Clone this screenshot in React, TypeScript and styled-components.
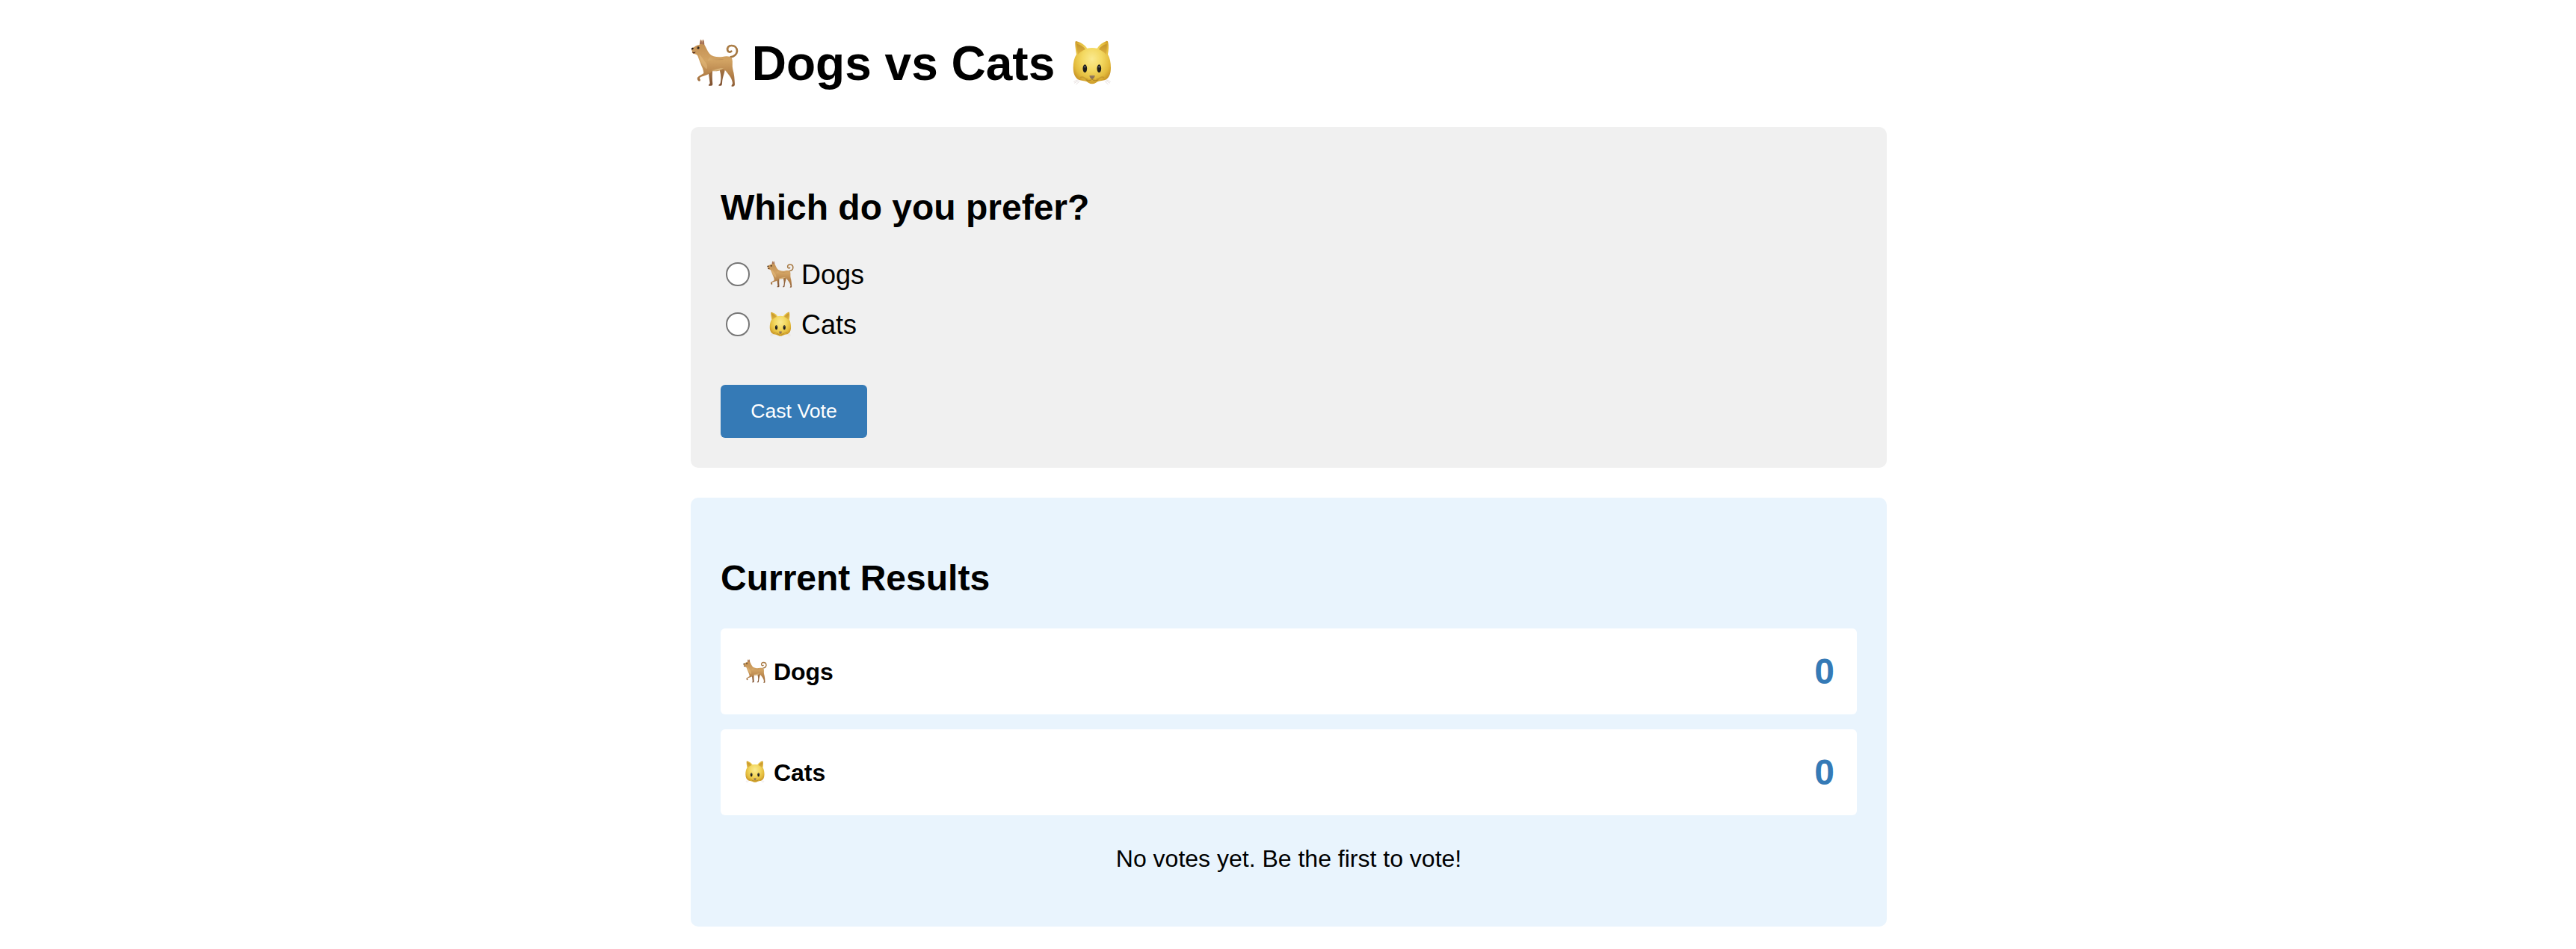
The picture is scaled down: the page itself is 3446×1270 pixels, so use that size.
import React, { useId, useState } from "react";
import styled, { createGlobalStyle } from "styled-components";

const GlobalStyle = createGlobalStyle`
  body {
    margin: 0;
    background: #ffffff;
    color: #000000;
    font-family: "Liberation Sans", Arial, sans-serif;
    font-size: 32px;
  }
`;

const Page = styled.main`
  width: 1600px;
  margin: 0 auto;
  padding: 49px 0 30px 2px;
`;

const Title = styled.h1`
  margin: 0 0 49px;
  font-size: 64px;
  line-height: 72px;
  height: 72px;
  white-space: pre;
`;

const Panel = styled.section<{ $tone: string }>`
  padding: 40px;
  border-radius: 10px;
  background: ${(p) => p.$tone};

  & + & {
    margin-top: 40px;
  }
`;

const Heading = styled.h2<{ $gap: number }>`
  margin: 41px 0 ${(p) => p.$gap}px;
  font-size: 48px;
  line-height: 54px;
`;

const Options = styled.div`
  display: flex;
  flex-direction: column;
  align-items: flex-start;
  gap: 27px;
`;

const Option = styled.label`
  display: flex;
  align-items: center;
  height: 40px;
  font-size: 36px;
  line-height: 40px;
  white-space: pre;
`;

const Radio = styled.input`
  appearance: none;
  box-sizing: border-box;
  width: 31.4px;
  height: 31.4px;
  margin: 0 23.3px 2px 7.3px;
  border: 2.4px solid #767676;
  border-radius: 50%;
  background: #ffffff;

  &:checked {
    border: 9px solid #0075ff;
  }
`;

const VoteButton = styled.button`
  display: block;
  width: 196px;
  height: 71px;
  margin: 60px 0 0;
  padding: 0 0 1px;
  border: 0;
  border-radius: 6px;
  background: #357ab6;
  color: #ffffff;
  font-family: inherit;
  font-size: 26.667px;
  line-height: 30px;
`;

const Results = styled.div`
  display: flex;
  flex-direction: column;
  gap: 20px;
`;

const ResultRow = styled.div`
  display: flex;
  justify-content: space-between;
  align-items: center;
  box-sizing: border-box;
  height: 115px;
  padding: 0 30px;
  border-radius: 6px;
  background: #ffffff;
`;

const ResultName = styled.span`
  font-weight: bold;
  line-height: 36px;
  height: 36px;
  white-space: pre;
`;

const ResultCount = styled.span`
  color: #357ab6;
  font-size: 48px;
  font-weight: bold;
  line-height: 54px;
`;

const Message = styled.p`
  margin: 40px 0 33px;
  line-height: 36px;
  text-align: center;
`;

const Emoji = styled.svg`
  display: inline-block;
  width: 1em;
  height: 1em;
  vertical-align: -0.133em;
  overflow: visible;
`;

function Dog() {
  const id = useId();
  const coat = `${id}coat`;
  const leg = `${id}leg`;
  const back = `${id}back`;
  return (
    <Emoji viewBox="42 34 192 192" role="img" aria-label="Dog">
      <defs>
        <linearGradient id={coat} x1="0" y1="0" x2="0" y2="1">
          <stop offset="0" stopColor="#c08c50" />
          <stop offset="0.45" stopColor="#d2a363" />
          <stop offset="0.75" stopColor="#b5824a" />
          <stop offset="1" stopColor="#8c5c36" />
        </linearGradient>
        <linearGradient id={leg} x1="0" y1="0" x2="0" y2="1">
          <stop offset="0" stopColor="#a87845" />
          <stop offset="1" stopColor="#7d4f30" />
        </linearGradient>
        <linearGradient id={back} x1="0" y1="0" x2="1" y2="0">
          <stop offset="0" stopColor="#e0b777" />
          <stop offset="1" stopColor="#ad7b46" />
        </linearGradient>
      </defs>
      <path d="M202 107C216 105 227 96 228 83C228 69 218 61 206 61C194 61 187 69 190 80C192 87 200 89 205 84" fill="none" stroke="#a3753f" strokeWidth="8" strokeLinecap="round" />
      <path d="M191 75C193 64 207 59 218 66" fill="none" stroke="#c99a60" strokeWidth="2.5" />
      <path d="M112 160L130 158C128 176 128 195 130 216Q130 222 124 222H114C113 217 119 216 119 212Z" fill={`url(#${leg})`} />
      <path d="M156 152L180 154C178 172 169 188 168 212Q168 221 163 222H154C154 217 160 215 161 211C166 190 162 172 156 152Z" fill={`url(#${leg})`} />
      <path d="M77 58C78 50 79 42 82 37Q86 36 87 48Q88 40 91 36Q96 39 97 57C103 66 108 82 118 94C128 105 148 109 170 106C186 102 202 103 208 114C212 126 207 140 211 156C217 176 218 196 219 218Q218 225 212 225H206C204 220 210 218 210 212C208 194 198 182 187 168C180 160 177 156 170 157C155 164 140 165 128 163C118 176 104 180 84 186C77 189 76 192 81 198Q82 204 75 204C69 200 67 194 69 189C75 181 88 177 94 172C93 154 85 144 80 129C74 116 73 108 69 101C64 95 57 96 50 92Q46 90 48 84L45 78Q44 70 49 69C59 68 62 59 77 58Z" fill={`url(#${coat})`} />
      <path d="M76 96C78 115 84 134 98 149C109 163 113 146 103 130C91 117 88 105 76 96Z" fill="#e9c283" opacity="0.45" />
      <path d="M110 122C130 116 149 124 176 116C155 112 136 119 120 106Z" fill={`url(#${back})`} opacity="0.5" />
      <path d="M126 160C142 159 153 150 174 152C158 162 140 166 126 160Z" fill="#f1dba6" opacity="0.5" />
      <path d="M80 55L82 39Q86 40 86 54M89 55L91 38Q95 42 95 57" fill="#915b50" stroke="#b08068" strokeWidth="1.5" />
      <path d="M45 71Q50 67 54 71Q53 78 46 78Z" fill="#1e1717" />
      <path d="M48 86Q54 89 62 86Q60 94 51 92Z" fill="#4c291f" />
      <ellipse cx="72" cy="70" rx="5" ry="5" fill="#2b211a" />
      <circle cx="71" cy="68" r="1.3" fill="#a99a83" />
    </Emoji>
  );
}

function Cat() {
  const id = useId();
  const face = `${id}face`;
  const ear = `${id}ear`;
  return (
    <Emoji viewBox="28 34 192 192" role="img" aria-label="Cat">
      <defs>
        <radialGradient id={face} cx="0.5" cy="0.42" r="0.6">
          <stop offset="0" stopColor="#faea90" />
          <stop offset="0.45" stopColor="#f3d860" />
          <stop offset="0.8" stopColor="#e3bb3c" />
          <stop offset="1" stopColor="#c99526" />
        </radialGradient>
        <linearGradient id={ear} x1="0" y1="0" x2="0" y2="1">
          <stop offset="0" stopColor="#c4942c" />
          <stop offset="1" stopColor="#dfb440" />
        </linearGradient>
      </defs>
      <path d="M67 198L50 206M70 201L52 212M74 204L59 217M181 198L198 206M178 201L196 212M174 204L189 217" fill="none" stroke="#ddd2cf" strokeWidth="2" />
      <path d="M60 43Q56 43 56 50C56 68 59 85 61 96C52 110 48 128 48 150C48 176 57 194 75 200C91 203 100 204 109 210Q124 219 139 210C148 204 157 203 173 200C191 194 199 176 199 150C199 128 195 110 187 96C190 80 191 63 188 48Q187 41 181 43C166 49 153 58 144 72Q124 68 104 72C95 58 78 48 60 43Z" fill={`url(#${face})`} />
      <path d="M63 54C77 57 90 65 97 76C83 82 74 88 67 97C64 81 62 67 63 54Z" fill={`url(#${ear})`} />
      <path d="M183 54C170 57 157 65 151 76C164 82 174 88 180 97C183 81 184 67 183 54Z" fill={`url(#${ear})`} />
      <path d="M76 190Q84 185 91 190T108 197M172 190Q164 185 157 190T140 197" fill="none" stroke="#a47724" strokeWidth="5" opacity="0.4" />
      <path d="M97 202Q111 195 124 194Q137 195 151 202L140 208Q124 218 108 208Z" fill="#d2a42e" opacity="0.6" />
      <path d="M123 190V196Q112 207 99 198M124 196Q135 207 149 198" fill="none" stroke="#9e7522" strokeWidth="2.5" />
      <path d="M113 182Q124 178 135 182C134 189 130 194 124 196C118 194 114 189 113 182Z" fill="#8b7258" />
      <path d="M117 184Q124 181 130 184" fill="none" stroke="#b49a7b" strokeWidth="2" />
      <ellipse cx="95" cy="153" rx="8.5" ry="16" fill="#1d1c1b" />
      <ellipse cx="152" cy="153" rx="8.5" ry="16" fill="#1d1c1b" />
      <ellipse cx="95" cy="146" rx="3" ry="4" fill="#62686b" />
      <ellipse cx="152" cy="146" rx="3" ry="4" fill="#62686b" />
    </Emoji>
  );
}

const pets = [
  { name: "Dogs", Icon: Dog },
  { name: "Cats", Icon: Cat },
];

export default function App() {
  const [choice, setChoice] = useState("");
  return (
    <>
      <GlobalStyle />
      <Page>
        <Title>
          <Dog />{" Dogs vs Cats "}<Cat />
        </Title>
        <Panel $tone="#f0f0f0">
          <Heading $gap={43}>Which do you prefer?</Heading>
          <Options>
            {pets.map(({ name, Icon }) => (
              <Option key={name}>
                <Radio
                  type="radio"
                  name="vote"
                  value={name}
                  checked={choice === name}
                  onChange={() => setChoice(name)}
                />
                <span><Icon />{` ${name}`}</span>
              </Option>
            ))}
          </Options>
          <VoteButton type="button">Cast Vote</VoteButton>
        </Panel>
        <Panel $tone="#e9f4fd">
          <Heading $gap={40}>Current Results</Heading>
          <Results>
            {pets.map(({ name, Icon }) => (
              <ResultRow key={name}>
                <ResultName><Icon />{` ${name}`}</ResultName>
                <ResultCount>0</ResultCount>
              </ResultRow>
            ))}
          </Results>
          <Message>No votes yet. Be the first to vote!</Message>
        </Panel>
      </Page>
    </>
  );
}
